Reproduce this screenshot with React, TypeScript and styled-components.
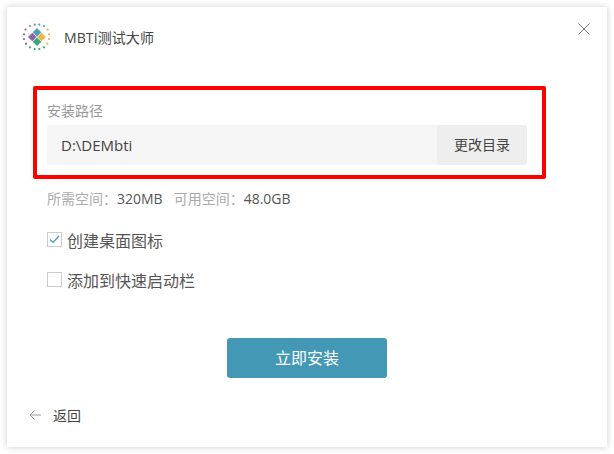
import styled, { createGlobalStyle } from 'styled-components';

const GlobalStyle = createGlobalStyle`
  html, body {
    margin: 0;
    padding: 0;
    background: #fff;
  }
  body {
    font-family: "Open Sans", "Noto Sans CJK SC", sans-serif;
  }
`

const Window = styled.div`
  position: relative;
  box-sizing: border-box;
  display: flex;
  flex-direction: column;
  width: 600px;
  height: 440px;
  margin: 7px;
  padding: 15px 0 0;
  background: #fff;
  box-shadow: 0 0 7px rgba(0, 0, 0, 0.2);
`

const Header = styled.div`
  display: flex;
  align-items: center;
  height: 30px;
  padding: 0 17px 0 15px;
`

const Title = styled.div`
  flex: 1;
  margin-left: 12px;
  font-size: 14px;
  letter-spacing: 0.1px;
  color: #444;
`

const CloseButton = styled.div`
  display: flex;
  width: 12px;
  height: 12px;
  margin-top: -16px;
`

const Body = styled.div`
  flex: 1;
  display: flex;
  flex-direction: column;
  padding: 50px 80px 0 40px;
`

const PathLabel = styled.div`
  height: 18px;
  line-height: 18px;
  font-size: 14px;
  color: #999;
`

const PathRow = styled.div`
  display: flex;
  height: 40px;
  margin-top: 5px;
  border-radius: 3px;
  overflow: hidden;
  background: #f5f5f5;
`

const PathValue = styled.div`
  flex: 1;
  padding-left: 14px;
  line-height: 40px;
  font-size: 15px;
  color: #444;
`

const ChangeButton = styled.div`
  width: 90px;
  line-height: 40px;
  text-align: center;
  font-size: 14px;
  color: #444;
  background: #eee;
`

const SpaceInfo = styled.div`
  display: flex;
  gap: 11px;
  margin-top: 25px;
  height: 18px;
  line-height: 18px;
  font-size: 14px;
  color: #555;
`

const Muted = styled.span`
  color: #aaa;
`

const OptionRow = styled.div<{ $top: number }>`
  display: flex;
  align-items: center;
  gap: 5px;
  height: 20px;
  margin-top: ${(p) => p.$top}px;
  font-size: 16px;
  color: #555;
`

const CheckBox = styled.div`
  box-sizing: border-box;
  display: flex;
  align-items: center;
  justify-content: center;
  width: 15px;
  height: 15px;
  border: 1px solid #ccc;
  margin-top: -2px;
`

const InstallButton = styled.div`
  align-self: center;
  width: 160px;
  height: 40px;
  margin: 48px 0 0 40px;
  border-radius: 3px;
  line-height: 40px;
  text-align: center;
  font-size: 16px;
  color: #fff;
  background: #4399b5;
`

const BackRow = styled.div`
  display: flex;
  align-items: center;
  gap: 12px;
  height: 20px;
  margin: 27px 0 22px 22px;
  font-size: 14px;
  color: #444;
`

const Highlight = styled.div`
  position: absolute;
  left: 26px;
  top: 79px;
  box-sizing: border-box;
  width: 513px;
  height: 93px;
  border: 4px solid #fe0000;
  border-radius: 2px;
`

const ringDots: [number, number, string][] = [
  [8, 4, '#4a9fbd'], [12.7, 2.7, '#4a9fbd'], [17.3, 2.7, '#4a9fbd'], [22, 4, '#4a9fbd'],
  [25.7, 7.7, '#eab54a'], [27, 12.3, '#eab54a'], [27, 17, '#eab54a'], [25.3, 21.7, '#eab54a'],
  [8, 25.3, '#37a77c'], [12.7, 27, '#37a77c'], [17.3, 27, '#37a77c'], [22, 25.3, '#37a77c'],
  [3.5, 7.5, '#8e63a5'], [2, 12.3, '#8e63a5'], [2, 17, '#8e63a5'], [4, 21.7, '#8e63a5'],
]

function Logo() {
  return (
    <svg width="30" height="30" viewBox="0 0 30 30">
      {ringDots.map(([x, y, c]) => (
        <circle key={`${x}-${y}`} cx={x} cy={y} r="1.1" fill={c} />
      ))}
      <path d="M15 6 19.3 10.3 15 14.6 10.7 10.3Z" fill="#4a9fbd" />
      <path d="M19.5 10.7 23.8 15 19.5 19.3 15.2 15Z" fill="#eab54a" />
      <path d="M15 15.4 19.3 19.7 15 24 10.7 19.7Z" fill="#37a77c" />
      <path d="M10.3 10.7 14.6 15 10.3 19.3 6 15Z" fill="#8e63a5" />
    </svg>
  )
}

export default function App() {
  return (
    <>
      <GlobalStyle />
      <Window>
        <Header>
          <Logo />
          <Title>MBTI测试大师</Title>
          <CloseButton>
            <svg width="12" height="12" viewBox="0 0 12 12">
              <path d="M.5.5l11 11M11.5.5l-11 11" stroke="#777" strokeWidth="1" fill="none" />
            </svg>
          </CloseButton>
        </Header>
        <Body>
          <PathLabel>安装路径</PathLabel>
          <PathRow>
            <PathValue>D:\DEMbti</PathValue>
            <ChangeButton>更改目录</ChangeButton>
          </PathRow>
          <SpaceInfo>
            <span><Muted>所需空间：</Muted>320MB</span>
            <span><Muted>可用空间：</Muted>48.0GB</span>
          </SpaceInfo>
          <OptionRow $top={22}>
            <CheckBox>
              <svg width="11" height="9" viewBox="0 0 11 9">
                <path d="M1 4.5 4 7.5 10 1" stroke="#4399b5" strokeWidth="1.2" fill="none" />
              </svg>
            </CheckBox>
            创建桌面图标
          </OptionRow>
          <OptionRow $top={20}>
            <CheckBox />
            添加到快速启动栏
          </OptionRow>
          <InstallButton>立即安装</InstallButton>
        </Body>
        <BackRow>
          <svg width="12" height="10" viewBox="0 0 12 10">
            <path d="M5.5.5 1 5l4.5 4.5M1 5h11" stroke="#999" strokeWidth="1" fill="none" />
          </svg>
          返回
        </BackRow>
        <Highlight />
      </Window>
    </>
  )
}
